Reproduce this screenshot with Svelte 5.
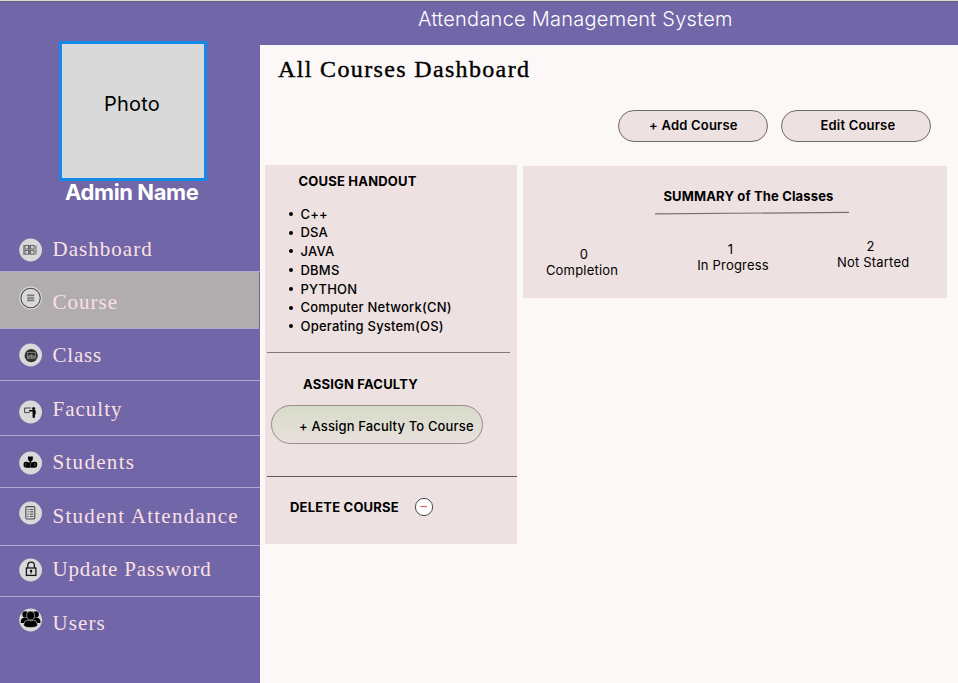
<script>
  const items = [
    { name: 'Dashboard', icon: 'grid', height: 49, iconTop: 15, textTop: 12.5, spacing: 1.03 },
    { name: 'Course', icon: 'menu', height: 57, iconTop: 14, textTop: 17, spacing: 1 },
    { name: 'Class', icon: 'class', height: 52, iconTop: 14, textTop: 13, spacing: 0.8 },
    { name: 'Faculty', icon: 'faculty', height: 55, iconTop: 19, textTop: 15, spacing: 1 },
    { name: 'Students', icon: 'reader', height: 52, iconTop: 14.5, textTop: 13, spacing: 1.3 },
    { name: 'Student Attendance', icon: 'list', height: 58, iconTop: 12.5, textTop: 15, spacing: 1.25 },
    { name: 'Update Password', icon: 'lock', height: 51, iconTop: 12, textTop: 10, spacing: 0.85 },
    { name: 'Users', icon: 'users', height: 86, iconTop: 11, textTop: 12.5, spacing: 1.1 }
  ];
  const current = 'Course';
  const courses = ['C++', 'DSA', 'JAVA', 'DBMS', 'PYTHON', 'Computer Network(CN)', 'Operating System(OS)'];
  const stats = [
    { count: 0, label: 'Completion', cls: 'done' },
    { count: 1, label: 'In Progress', cls: 'progress' },
    { count: 2, label: 'Not Started', cls: 'pending' }
  ];
</script>

<div class="app">
  <aside>
    <div class="photo">Photo</div>
    <div class="admin">Admin Name</div>
    <nav>
      {#each items as item}
        <div class="item" class:active={item.name === current} style="height: {item.height}px">
          <svg class="icon" style="margin-top: {item.iconTop}px" width="24" height="24" viewBox="0 0 24 24">
            <g transform="translate(.6 0)">
            <circle cx="12" cy="12" r="11.4" fill="#d9d9d9" />
            {#if item.icon === 'grid'}
              <g fill="none" stroke="#555" stroke-width="0.9">
                <rect x="6.4" y="7.4" width="3.6" height="3.6" /><rect x="6.4" y="12.6" width="3.6" height="3.6" />
                <rect x="12" y="7.4" width="3.4" height="3.6" /><rect x="12" y="12.6" width="3.4" height="3.6" />
                <path d="M5.3 7v10M17.3 7.5v9M10.7 7v9.5" />
              </g>
            {:else if item.icon === 'menu'}
              <circle cx="12" cy="12" r="9.7" fill="none" stroke="#4d4d4d" stroke-width="1.1" />
              <path d="M8.5 9.4h7.2M8.5 12h7.2M8.5 14.4h7.2" stroke="#777" stroke-width="1.7" />
            {:else if item.icon === 'class'}
              <circle cx="12.6" cy="12.7" r="6.6" fill="#30312f" />
              <rect x="8.7" y="9.5" width="8" height="6" fill="none" stroke="#92938f" stroke-width=".7" />
              <path d="M9.7 14.7v-1.8M11.3 14.7v-2.5M12.7 14.7v-3.2M14.2 14.7v-2.5M15.7 14.7v-1.8" stroke="#c5c6c2" stroke-width=".8" />
            {:else if item.icon === 'faculty'}
              <path d="M12.5 8H6v4.6h5" fill="none" stroke="#444" stroke-width="1" />
              <circle cx="15" cy="8.6" r="1.5" />
              <path d="M10.5 10h5.5q1.1 0 1.1 1.3v3h-.8v3.5h-2.3v-6.3h-3.5z" />
            {:else if item.icon === 'reader'}
              <path d="M9.3 5.6h5v2.5q-.4 1.7-1.6 2.1v1.7q2-1.4 3.8-1.1 2.1.2 2.1 2v2.3q-.4 1.7-2.5 1.7h-8.6q-2.1 0-2.5-1.7v-2.3q0-1.8 2.1-2 1.8-.3 3.8 1.1v-1.7Q9.7 9.8 9.3 8.1z" />
              <path d="M11.8 12v4.8" stroke="#888" stroke-width=".5" />
              <path d="M7.4 12v3.4M16.3 12v3.4" stroke="#aaa" stroke-width=".5" />
            {:else if item.icon === 'list'}
              <rect x="7.2" y="5.6" width="9" height="12.4" rx="1.2" fill="none" stroke="#4d4d4d" stroke-width="1.1" />
              <path d="M8.8 8.5h1.2M11.1 8.5h3.7M8.8 10.8h1.2M11.1 10.8h3.7M8.8 13.1h1.2M11.1 13.1h3.7M8.8 15.4h1.2M11.1 15.4h3.7" stroke="#4d4d4d" stroke-width="1" />
            {:else if item.icon === 'lock'}
              <g fill="none" stroke="#161616" stroke-width="1.3">
                <rect x="7.8" y="10" width="9.5" height="7.4" />
                <path d="M9.2 10V7.2q0-3 3.3-3t3.3 3V10" />
              </g>
              <circle cx="12.5" cy="12.9" r="1.2" /><path d="M12.5 13v2.7" stroke="#161616" />
            {:else}
              <circle cx="6.8" cy="6.4" r="3.1" /><circle cx="17.2" cy="6.4" r="3.1" />
              <path d="M2.2 15v-1.7q0-3 3-3.6h13.6q3 .6 3 3.6V15z" />
              <g stroke="#d9d9d9" stroke-width=".6">
                <path d="M8 7q0-3.9 4-3.9T16 7q0 5-4 5T8 7z" />
                <path d="M5.2 18v-1.6q0-3.8 4-4.2 2.8 1.4 5.6 0 4 .4 4 4.2V18q-2.2 1.6-6.8 1.6T5.2 18z" />
              </g>
            {/if}
            </g>
          </svg>
          <span class="label" style="margin-top: {item.textTop}px; letter-spacing: {item.spacing}px">{item.name}</span>
        </div>
      {/each}
    </nav>
  </aside>

  <div class="right">
    <header>Attendance Management System</header>
    <main>
      <h1>All Courses Dashboard</h1>
      <div class="actions">
        <button class="add">+ Add Course</button>
        <button class="edit">Edit Course</button>
      </div>
      <div class="panels">
        <section class="handout">
          <h2 class="h-handout">COUSE HANDOUT</h2>
          <ul>
            {#each courses as course}
              <li>{course}</li>
            {/each}
          </ul>
          <div class="rule first"></div>
          <h2 class="h-assign">ASSIGN FACULTY</h2>
          <button class="assign">+ Assign Faculty To Course</button>
          <div class="rule second"></div>
          <div class="delete">
            <h2>DELETE COURSE</h2>
            <svg width="20" height="20" viewBox="0 0 20 20">
              <circle cx="10" cy="10" r="8.6" fill="#fff" stroke="#4a4a4a" stroke-width="1" />
              <path d="M6.3 9.5h6.5" stroke="#e06464" stroke-width="1.3" />
            </svg>
          </div>
        </section>
        <section class="summary">
          <h2>SUMMARY of The Classes</h2>
          <svg class="underline" width="196" height="4" viewBox="0 0 196 4">
            <path d="M1 2.8L195 1.4" stroke="#777272" stroke-width="1.2" />
          </svg>
          <div class="stats">
            {#each stats as stat}
              <div class="stat {stat.cls}">
                <span class="count">{stat.count}</span>
                <span>{stat.label}</span>
              </div>
            {/each}
          </div>
        </section>
      </div>
    </main>
  </div>
</div>

<style>
  .app {
    display: flex;
    width: 958px;
    height: 683px;
    overflow: hidden;
    box-sizing: border-box;
    border-top: 1px solid #d8dad8;
    background: #7166a7;
    box-shadow: inset 0 1px #67647f;
    font-family: Inter, sans-serif;
    color: #000;
    white-space: nowrap;
  }
  aside { width: 260px; flex: none; }
  .photo {
    box-sizing: border-box;
    width: 148px;
    height: 140px;
    margin: 40px 0 0 59px;
    border: 3px solid #148ae8;
    background: #d9d9d9;
    padding-left: 42px;
    font-size: 20px;
    line-height: 121px;
    letter-spacing: .2px;
  }
  .admin {
    margin: -1px 0 0 65px;
    height: 24px;
    line-height: 24px;
    font-size: 22px;
    font-weight: 700;
    letter-spacing: -.4px;
    color: #fff;
  }
  nav { margin-top: 19px; }
  .item {
    display: flex;
    align-items: flex-start;
    box-sizing: border-box;
    border-bottom: 1px solid #b1a9cf;
  }
  .item:last-child { border-bottom: 0; }
  .item.active { background: #b1adae; width: 259px; }
  .icon { flex: none; margin-left: 18px; overflow: visible; }
  .label {
    margin-left: 10.5px;
    font-family: "Liberation Serif", serif;
    font-size: 21px;
    line-height: 26px;
    color: #fbe0e4;
  }
  .right { flex: 1; display: flex; flex-direction: column; }
  header {
    height: 44px;
    box-sizing: border-box;
    padding: 5px 0 0 158px;
    font-size: 20px;
    line-height: 26px;
    font-weight: 300;
    letter-spacing: .25px;
    color: #fff;
  }
  main { flex: 1; background: #fcf8f7; }
  h1 {
    margin: 10px 0 0 18px;
    font: 400 24px/28px "Liberation Serif", serif;
    letter-spacing: 1.35px;
    -webkit-text-stroke: .4px #000;
  }
  button {
    box-sizing: border-box;
    font-family: inherit;
    color: #000;
    border: 1px solid #6f6a6a;
    background: #ede1e1;
    text-align: left;
  }
  .actions { display: flex; gap: 13.4px; margin: 27px 0 0 358px; }
  .actions button {
    width: 150px;
    height: 32px;
    border-radius: 16px;
    padding: 0 0 2px 30px;
    font-size: 13px;
    font-weight: 600;
    letter-spacing: .2px;
  }
  .actions .edit { padding: 0 0 2px 38px; }
  .panels { display: flex; gap: 5.5px; align-items: flex-start; margin: 23px 0 0 5px; }
  section { background: #ede1e1; }
  h2 { margin: 0; font-size: 13px; line-height: 16px; font-weight: 700; letter-spacing: .2px; }
  .handout { width: 252.4px; height: 379px; }
  .h-handout { padding: 8px 0 0 33.5px; }
  ul { list-style: none; margin: 15.5px 0 0; padding: 0 0 0 23.5px; }
  li {
    display: flex;
    align-items: center;
    gap: 8px;
    height: 18.75px;
    line-height: 18.75px;
    font-size: 13px;
    font-weight: 500;
    letter-spacing: .2px;
  }
  li::before { content: ''; width: 4px; height: 4px; border-radius: 50%; background: #000; }
  .rule { height: 1px; }
  .first { margin: 16px 0 0 2px; width: 243px; background: #807b7b; }
  .h-assign { padding: 23.5px 0 0 38px; }
  .assign {
    display: block;
    width: 212px;
    height: 39px;
    margin: 12.5px 0 0 6px;
    padding: 3px 0 0 27px;
    border-radius: 20px;
    border-color: #978c8c;
    background: linear-gradient(#d6dbc9, #e8e0dc);
    font-size: 13px;
    font-weight: 500;
    letter-spacing: .15px;
  }
  .second { margin: 32px 0 0 2px; width: 250px; background: #5e5959; }
  .delete { display: flex; align-items: center; gap: 15.5px; padding: 20px 0 0 25px; }
  .summary { width: 424px; height: 132px; margin-top: 1px; display: flex; flex-direction: column; }
  .summary h2 { padding: 22px 0 0 140.5px; letter-spacing: .15px; }
  .underline { margin: 7px 0 0 131px; }
  .stats { display: flex; align-items: flex-start; letter-spacing: .2px; }
  .stat { display: flex; flex-direction: column; align-items: center; font-size: 13px; line-height: 16px; }
  .done { margin: 31px 0 0 23px; }
  .progress { margin: 26px 0 0 79px; }
  .pending { margin: 23px 0 0 68px; }
  .stat .count { margin-right: -4px; }
  .progress .count, .pending .count { margin: 0 5px 0 0; }
</style>
